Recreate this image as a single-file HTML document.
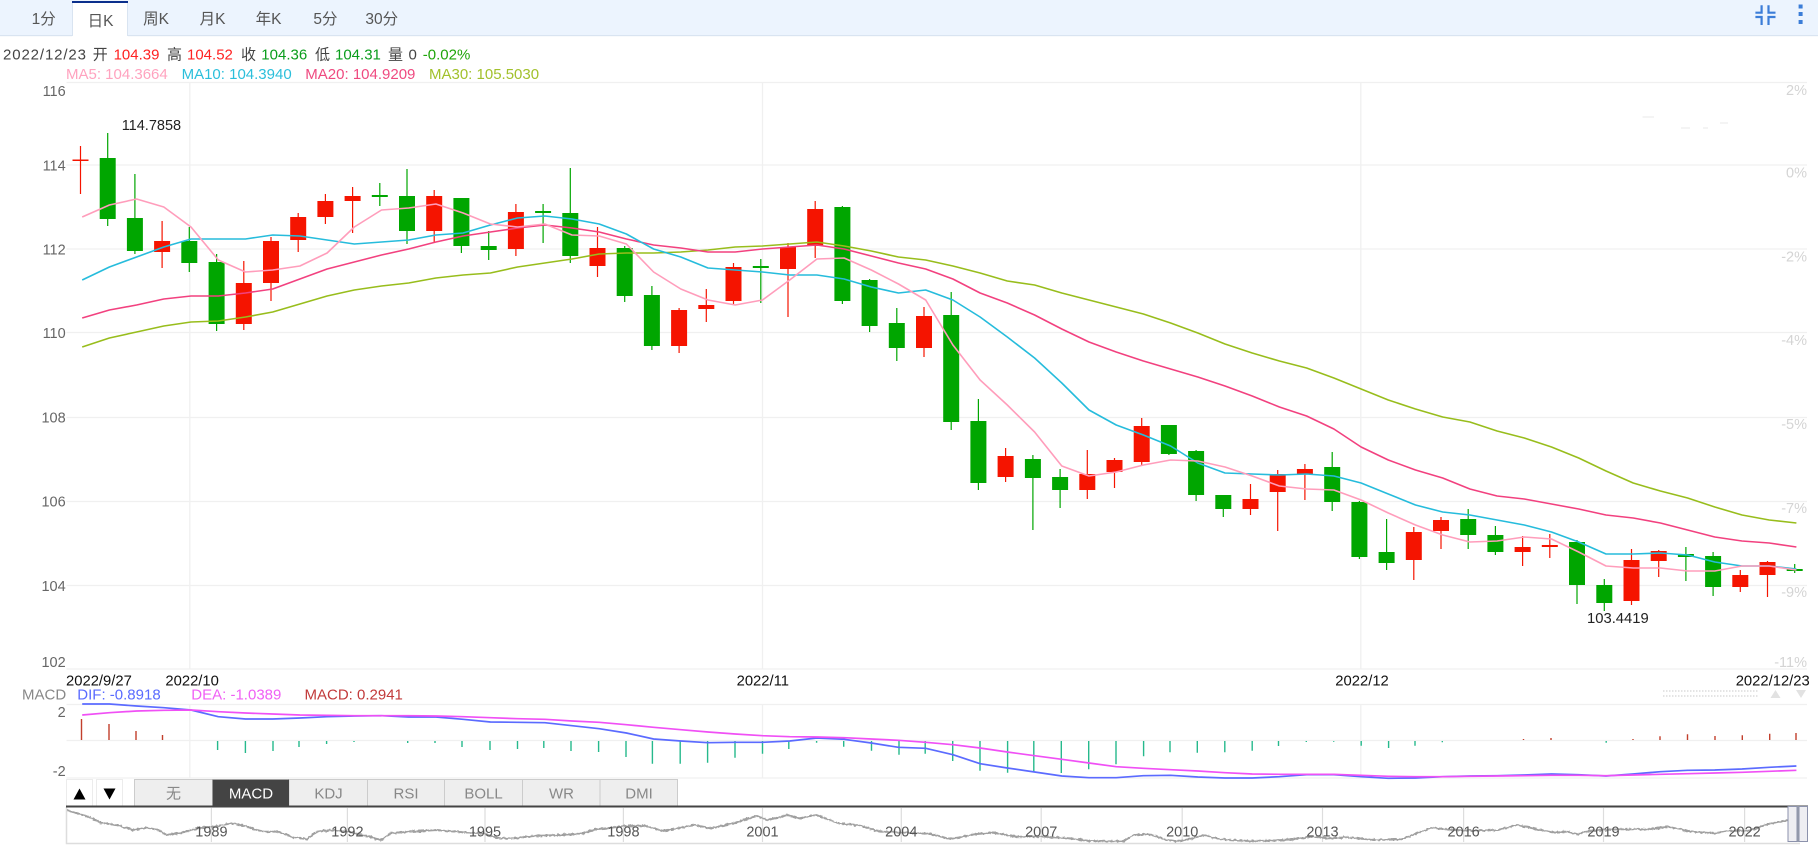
<!DOCTYPE html>
<html><head><meta charset="utf-8"><title>K</title>
<style>
html,body{margin:0;padding:0;background:#fff;width:1818px;height:868px;overflow:hidden}
svg{display:block}
text{font-family:"Liberation Sans","Noto Sans CJK SC",sans-serif}
.y{font-size:14.5px;fill:#666;text-anchor:end}
.p{font-size:14.5px;fill:#d4d4d4;text-anchor:end}
.d{font-size:14.8px;fill:#111}
.t{font-size:15.5px;fill:#555;text-anchor:middle}
.o{font-size:15px;fill:#444}
.r{font-size:15px;fill:#f22}
.g{font-size:15px;fill:#0a9d1c}
.m{font-size:15px}
.b{font-size:15px;fill:#888;text-anchor:middle}
.n{font-size:14.5px;fill:#555;text-anchor:middle}
.ma{fill:none;stroke-linejoin:round}
</style></head><body>
<svg width="1818" height="868" viewBox="0 0 1818 868" xmlns="http://www.w3.org/2000/svg">
<defs>
<filter id="jit" x="-2%" y="-30%" width="104%" height="160%"><feTurbulence type="fractalNoise" baseFrequency="0.35" numOctaves="2" seed="4"/><feDisplacementMap in="SourceGraphic" scale="3" xChannelSelector="R" yChannelSelector="G"/></filter>
</defs>
<!-- top bar -->
<rect x="0" y="0" width="1818" height="35" fill="#ecf4fe"/>
<rect x="0" y="35" width="1818" height="1.2" fill="#d9e4f1"/>
<rect x="72" y="1" width="56" height="36" fill="#fff"/>
<path d="M72.5 3V36M127.5 3V36" stroke="#d9e4f1" stroke-width="1" fill="none"/>
<rect x="72" y="1" width="56" height="2" fill="#0b2f8c"/>
<text class="t" x="43.7" y="24">1分</text>
<text class="t" x="100.5" y="26">日K</text>
<text class="t" x="156" y="24">周K</text>
<text class="t" x="212.6" y="24">月K</text>
<text class="t" x="268.6" y="24">年K</text>
<text class="t" x="325.4" y="24">5分</text>
<text class="t" x="381.8" y="24">30分</text>
<path d="M1761.6 5.3V12.7H1755.4M1768.5 5.3V12.7H1775.5M1755.4 17H1761.6V25M1775.5 17H1768.5V25" fill="none" stroke="#3b7dd8" stroke-width="2.2"/>
<path d="M1798.6 4.5h4v4h-4zM1798.6 12h4v4h-4zM1798.6 20h4v4h-4z" fill="#3b7dd8"/>
<!-- info -->
<text class="o" x="3" y="59.5" textLength="83" lengthAdjust="spacing">2022/12/23</text>
<text class="o" x="92.8" y="59.5">开</text><text class="r" x="113.6" y="59.5">104.39</text>
<text class="o" x="167" y="59.5">高</text><text class="r" x="187" y="59.5">104.52</text>
<text class="o" x="241" y="59.5">收</text><text class="g" x="261.3" y="59.5">104.36</text>
<text class="o" x="315" y="59.5">低</text><text class="g" x="335" y="59.5">104.31</text>
<text class="o" x="388" y="59.5">量</text><text class="o" x="408.5" y="59.5">0</text>
<text class="g" x="422.8" y="59.5" style="fill:#1fa50a">-0.02%</text>
<text class="m" x="66" y="79" fill="#ffa3bf">MA5: 104.3664</text>
<text class="m" x="181.6" y="79" fill="#2bbfdb">MA10: 104.3940</text>
<text class="m" x="305.3" y="79" fill="#ef4a80">MA20: 104.9209</text>
<text class="m" x="429" y="79" fill="#a2c12c">MA30: 105.5030</text>
<!-- grid -->
<path d="M66.5 82.5H1807M66.5 165H1807M66.5 249H1807M66.5 332.5H1807M66.5 417.5H1807M66.5 501.5H1807M66.5 585.5H1807M66.5 669H1807M66.5 704.5H1807M66.5 740.5H1807M66.5 778H1807M189.8 82V669M762.5 82V669M1360.8 82V669M189.8 704V778M762.5 704V778M1360.8 704V778" stroke="#f0f0f0" stroke-width="1.3" fill="none"/>
<!-- axis -->
<text class="y" x="65.7" y="96">116</text><text class="y" x="65.7" y="170.7">114</text><text class="y" x="65.7" y="254.3">112</text><text class="y" x="65.7" y="338">110</text><text class="y" x="65.7" y="422.7">108</text><text class="y" x="65.7" y="506.7">106</text><text class="y" x="65.7" y="591">104</text><text class="y" x="65.7" y="667">102</text>
<text class="p" x="1807" y="95">2%</text><text class="p" x="1807" y="177.5">0%</text><text class="p" x="1807" y="261.5">-2%</text><text class="p" x="1807" y="345">-4%</text><text class="p" x="1807" y="429">-5%</text><text class="p" x="1807" y="513">-7%</text><text class="p" x="1807" y="597">-9%</text><text class="p" x="1807" y="667">-11%</text>
<path d="M1642.5 117H1654M1681 128H1690M1703 128H1708M1720 123H1728" stroke="#e4e4e4" stroke-width=".8" fill="none"/>
<!-- wicks -->
<path fill="none" stroke="#f51400" stroke-width="1.2" d="M80.5 146V194M162.1 221V268M243.8 261V330M271 237V301M298.2 213V252M325.4 194V224M352.6 187V233M434.2 190V243M515.9 204V256M597.5 227V277M679.1 308V353M706.3 289V322M733.5 263V305M788 243V317M815.2 201V258M924 307V357M1005.6 448V482M1087.3 450V499M1114.5 458V488M1141.7 418V465M1250.5 484V515M1277.7 470V531M1304.9 464V500M1413.8 527V580M1441 517V549M1522.6 536V566M1549.8 534V558M1631.5 549V605M1658.7 550V577M1740.3 570V592M1767.5 561V597"/>
<path fill="none" stroke="#00a600" stroke-width="1.2" d="M107.7 133V226M134.9 174V254M189.3 227V272M216.6 254V331M379.8 183V206M407 169V244M461.4 198V253M488.7 231V260M543.1 204V243M570.3 168V263M624.7 246V302M651.9 286V350M760.8 259V303M842.4 206V304M869.6 279V332M896.8 308V361M951.2 292V430M978.4 399V490M1032.9 455V530M1060.1 469V508M1168.9 425V455M1196.1 450V501M1223.3 495V517M1332.2 452V511M1359.4 501V559M1386.6 519V570M1468.2 509V549M1495.4 526V555M1577 540V604M1604.3 579V611M1685.9 547V581M1713.1 552V596M1794.7 564V573"/>
<!-- bodies -->
<path fill="none" stroke="#f51400" stroke-width="16" d="M80.5 159.5V161M162.1 241V252M243.8 283V324M271 241V283M298.2 217V240M325.4 201V217M352.6 196V201M434.2 196V231M515.9 212V249M597.5 248V266M679.1 310V346M706.3 305V309M733.5 267V301M788 247V269M815.2 209V246M924 316V348M1005.6 456V477M1087.3 474V490M1114.5 460V472M1141.7 426V462M1250.5 499V509M1277.7 474V492M1304.9 469V474M1413.8 532V560M1441 520V531M1522.6 547V552M1549.8 545V547M1631.5 560V601M1658.7 551V561M1740.3 575V587M1767.5 562V575"/>
<path fill="none" stroke="#00a600" stroke-width="16" d="M107.7 158V219M134.9 218V251M189.3 241V263M216.6 262V324M379.8 195V197M407 196V231M461.4 198V246M488.7 246V250M543.1 211V213M570.3 213V256M624.7 248V296M651.9 295V346M760.8 266V268M842.4 207V301M869.6 280V326M896.8 323V348M951.2 315V422M978.4 421V483M1032.9 459V478M1060.1 477V490M1168.9 425V454M1196.1 451V495M1223.3 495V509M1332.2 467V502M1359.4 502V557M1386.6 552V563M1468.2 519V535M1495.4 535V552M1577 542V585M1604.3 585V603M1685.9 554V557M1713.1 556V587M1794.7 569V571"/>
<!-- MA lines -->
<g transform="translate(1.7 0)">
<polyline class="ma" stroke="#98bd1c" stroke-width="1.6" points="80.5,347 107.7,338 134.9,332 162.1,326 189.3,322 216.6,321 243.8,317 271,312 298.2,304 325.4,296 352.6,290 379.8,286 407,283 434.2,278 461.4,275 488.7,273 515.9,267 543.1,263 570.3,259 597.5,254 624.7,253 651.9,253 679.1,252 706.3,250 733.5,247 760.8,246 788,244 815.2,242 842.4,246 869.6,251 896.8,257 924,260 951.2,266 978.4,273 1005.6,281 1032.9,285 1060.1,293 1087.3,300 1114.5,307 1141.7,314 1168.9,323 1196.1,333 1223.3,344 1250.5,353 1277.7,361 1304.9,368 1332.2,378 1359.4,389 1386.6,400 1413.8,409 1441,417 1468.2,422 1495.4,431 1522.6,438 1549.8,447 1577,458 1604.3,471 1631.5,483 1658.7,491 1685.9,498 1713.1,507 1740.3,515 1767.5,520 1794.7,523"/>
<polyline class="ma" stroke="#f2417f" stroke-width="1.6" points="80.5,318 107.7,310 134.9,305 162.1,299 189.3,296 216.6,296 243.8,293 271,289 298.2,279 325.4,269 352.6,262 379.8,255 407,249 434.2,242 461.4,236 488.7,232 515.9,228 543.1,225 570.3,228 597.5,232 624.7,239 651.9,245 679.1,248 706.3,252 733.5,252 760.8,249 788,247 815.2,245 842.4,249 869.6,256 896.8,263 924,269 951.2,279 978.4,293 1005.6,303 1032.9,315 1060.1,329 1087.3,342 1114.5,352 1141.7,361 1168.9,369 1196.1,377 1223.3,386 1250.5,396 1277.7,407 1304.9,416 1332.2,429 1359.4,447 1386.6,460 1413.8,470 1441,478 1468.2,489 1495.4,496 1522.6,499 1549.8,504 1577,509 1604.3,515 1631.5,518 1658.7,523 1685.9,530 1713.1,537 1740.3,541 1767.5,543 1794.7,547"/>
<polyline class="ma" stroke="#26bcdc" stroke-width="1.6" points="80.5,280 107.7,267 134.9,257 162.1,247 189.3,239 216.6,239 243.8,239 271,235 298.2,236 325.4,240 352.6,244 379.8,242 407,240 434.2,235 461.4,233 488.7,225 515.9,218 543.1,216 570.3,219 597.5,224 624.7,234 651.9,249 679.1,257 706.3,268 733.5,270 760.8,272 788,275 815.2,275 842.4,279 869.6,287 896.8,293 924,290 951.2,300 978.4,317 1005.6,337 1032.9,358 1060.1,383 1087.3,410 1114.5,425 1141.7,435 1168.9,446 1196.1,463 1223.3,473 1250.5,474 1277.7,475 1304.9,474 1332.2,476 1359.4,483 1386.6,494 1413.8,505 1441,512 1468.2,515 1495.4,520 1522.6,525 1549.8,532 1577,542 1604.3,554 1631.5,554 1658.7,553 1685.9,555 1713.1,562 1740.3,566 1767.5,566 1794.7,569"/>
<polyline class="ma" stroke="#ff9dbb" stroke-width="1.6" points="80.5,217 107.7,205 134.9,199 162.1,207 189.3,227 216.6,260 243.8,272 271,270 298.2,266 325.4,253 352.6,227 379.8,210 407,208 434.2,204 461.4,213 488.7,224 515.9,227 543.1,224 570.3,235 597.5,236 624.7,244 651.9,272 679.1,289 706.3,300 733.5,305 760.8,300 788,280 815.2,259 842.4,258 869.6,270 896.8,284 924,300 951.2,345 978.4,380 1005.6,405 1032.9,432 1060.1,466 1087.3,476 1114.5,472 1141.7,465 1168.9,460 1196.1,461 1223.3,467 1250.5,476 1277.7,486 1304.9,489 1332.2,490 1359.4,500 1386.6,513 1413.8,525 1441,535 1468.2,542 1495.4,541 1522.6,537 1549.8,539 1577,552 1604.3,566 1631.5,568 1658.7,568 1685.9,571 1713.1,571 1740.3,566 1767.5,566 1794.7,570"/>
</g>
<!-- annotations -->
<text x="121.7" y="130" style="font-size:14.5px" fill="#222">114.7858</text>
<text x="1587" y="623" style="font-size:14.8px" fill="#222">103.4419</text>
<text class="d" x="66" y="685.5">2022/9/27</text>
<text class="d" x="165.4" y="685.5">2022/10</text>
<text class="d" x="736.6" y="685.5">2022/11</text>
<text class="d" x="1335.3" y="685.5">2022/12</text>
<text class="d" x="1735.7" y="685.5">2022/12/23</text>
<!-- macd legend -->
<text class="m" x="22" y="699.5" fill="#888">MACD</text>
<text class="m" x="77.3" y="699.5" fill="#5a6bff">DIF: -0.8918</text>
<text class="m" x="191.3" y="699.5" fill="#f060f5">DEA: -1.0389</text>
<text class="m" x="304.5" y="699.5" fill="#c23a3a">MACD: 0.2941</text>
<path d="M1663 691H1759M1663 696H1759" stroke="#dcdcdc" stroke-width="1.6" stroke-dasharray="1.5 1.5" fill="none"/>
<path d="M1770.5 698L1775.5 690L1780.5 698ZM1796 690L1801 698L1806 690Z" fill="#e2e2e2"/>
<text class="y" x="65.7" y="717">2</text><text class="y" x="65.7" y="776">-2</text>
<!-- macd histogram -->
<path fill="none" stroke="#c23f2c" stroke-width="1.4" d="M81.5 740V719M109 740V724M136 740V731M162.5 740V735M1523.5 740V739M1551 740V738M1633 740V739M1660 740V736.3M1687.5 740V734.3M1715 740V736M1742.3 740V735.3M1769.7 740V733.7M1796 740V733"/>
<path fill="none" stroke="#26b98c" stroke-width="1.4" d="M217.6 741V750M245.4 741V753M273 741V751M299 741V747M326.6 741V744M354 741V742M407.7 741V743M435 741V743M462 741V747M490 741V750M517.5 741V749M543.8 741V748M571 741V751M598.6 741V752M626 741V757M652.4 741V763.7M680.2 741V763.7M707.6 741V762.7M735 741V757.7M762.5 741V753.7M788.8 741V749M816.6 741V742.7M843.7 741V746.7M871.5 741V750.7M899 741V754.7M925.2 741V753.7M952.7 741V761M980 741V770.7M1007.6 741V772.7M1033.8 741V771.7M1061.3 741V773M1088.7 741V769.3M1116 741V764.3M1143.6 741V756.3M1170 741V752.3M1197.3 741V752.7M1224.8 741V752.3M1252.2 741V750.7M1278.5 741V746M1306.3 741V742M1333.7 741V741.7M1361.2 741V745.7M1388.6 741V748M1415 741V745.7M1442.3 741V742.3M1606.2 741V742.7"/>
<!-- macd lines -->
<g transform="translate(1.7 0)">
<polyline class="ma" stroke="#5b6bff" stroke-width="1.7" points="80.5,704 107.7,704 134.9,706 162.1,707.7 189.3,710 216.6,716.7 243.8,719 271,719 298.2,718 325.4,716.7 352.6,716 379.8,715.7 407,717 434.2,717 461.4,719.3 488.7,722 515.9,722.3 543.1,722.7 570.3,725.7 597.5,728.7 624.7,733 651.9,739 679.1,741 706.3,742.7 733.5,742.3 760.8,742.3 788,741 815.2,738 842.4,739.3 869.6,743 896.8,747.3 924,748.3 951.2,754.7 978.4,763.7 1005.6,768 1032.9,772 1060.1,776 1087.3,777.7 1114.5,777.7 1141.7,775.7 1168.9,775.3 1196.1,777 1223.3,778 1250.5,778 1277.7,776.7 1304.9,774.7 1332.2,774.7 1359.4,776.7 1386.6,778.3 1413.8,778 1441,776.7 1468.2,776 1495.4,775.7 1522.6,775 1549.8,774 1577,774.7 1604.3,776 1631.5,774 1658.7,771.7 1685.9,770.3 1713.1,770 1740.3,769 1767.5,767.3 1794.7,766"/>
<polyline class="ma" stroke="#f050f5" stroke-width="1.7" points="80.5,715 107.7,712.7 134.9,711 162.1,710.3 189.3,710 216.6,711.7 243.8,713 271,714 298.2,715 325.4,715.3 352.6,715.7 379.8,715.7 407,715.7 434.2,716 461.4,716.7 488.7,717.7 515.9,718.7 543.1,719.3 570.3,721 597.5,722.3 624.7,724.7 651.9,727.3 679.1,729.7 706.3,732 733.5,734 760.8,735.7 788,736.7 815.2,737 842.4,737.7 869.6,739 896.8,740.3 924,742.3 951.2,744.7 978.4,748 1005.6,752 1032.9,755.7 1060.1,759.3 1087.3,763 1114.5,766.7 1141.7,768.3 1168.9,769.7 1196.1,771 1223.3,772.7 1250.5,774 1277.7,774.3 1304.9,774.3 1332.2,774.3 1359.4,775.3 1386.6,776.3 1413.8,776.7 1441,776.7 1468.2,776.3 1495.4,776 1522.6,775.7 1549.8,775.3 1577,775.3 1604.3,775.7 1631.5,775 1658.7,774.3 1685.9,773.7 1713.1,773 1740.3,772.3 1767.5,771.3 1794.7,770.3"/>
</g>
<!-- indicator tabs -->
<g stroke="#ececec" stroke-width="1" fill="#fff"><rect x="66.5" y="779.5" width="26" height="27"/><rect x="96.5" y="779.5" width="26" height="27"/></g>
<path d="M73.5 799.5L79.5 788.5L85.5 799.5ZM103.5 788.5L109.5 799.5L115.5 788.5Z" fill="#000"/>
<g stroke="#ccc" stroke-width="1" fill="#eee">
<rect x="134.5" y="779.5" width="78" height="27"/><rect x="289" y="779.5" width="78.5" height="27"/><rect x="367.5" y="779.5" width="77" height="27"/><rect x="444.5" y="779.5" width="78" height="27"/><rect x="522.5" y="779.5" width="77.5" height="27"/><rect x="600" y="779.5" width="77.5" height="27"/>
</g>
<rect x="212.6" y="779.5" width="76.4" height="27" fill="#444"/>
<text class="b" x="173.5" y="798.5">无</text>
<text class="b" x="251" y="798.5" style="fill:#fff">MACD</text>
<text class="b" x="328.5" y="798.5">KDJ</text>
<text class="b" x="406" y="798.5">RSI</text>
<text class="b" x="483.5" y="798.5">BOLL</text>
<text class="b" x="561.5" y="798.5">WR</text>
<text class="b" x="639" y="798.5">DMI</text>
<!-- navigator -->
<path d="M211.4 808V842M347.4 808V842M485 808V842M623.4 808V842M762.5 808V842M901.3 808V842M1041.2 808V842M1182.2 808V842M1322.5 808V842M1463.6 808V842M1603.5 808V842M1744.6 808V842" stroke="#ddd" stroke-width="1.2" fill="none"/>
<g filter="url(#jit)" fill="none" stroke="#a0a0a0" stroke-width="1.9">
<polyline vector-effect="non-scaling-stroke" transform="translate(0 660) scale(.38647 .33333)" points="172,450 200,460 240,475 260,488 300,495 345,510 380,503 410,510 430,525 470,518 510,505 550,500 600,490 630,497 680,515 720,515 760,533 795,537 820,515 860,510 900,515 940,525 985,540 1010,520 1060,515 1130,510 1200,517 1250,520 1290,535 1330,535 1380,528 1450,525 1510,520 1540,508 1568,505"/>
<polyline vector-effect="non-scaling-stroke" transform="translate(606 660) scale(.38647 .33333)" points="0,505 50,498 100,497 150,513 230,495 270,505 330,490 390,468 420,480 470,465 500,475 545,465 600,490 650,495 710,515 780,518 840,522 890,537 960,522 1000,518 1060,530 1130,530 1200,535 1250,543 1300,544 1340,543 1365,525 1405,522 1450,540 1480,544 1510,537 1550,525 1568,533"/>
<polyline vector-effect="non-scaling-stroke" transform="translate(1212 660) scale(.38647 .33333)" points="0,533 50,541 100,543 150,542 210,538 260,530 300,535 350,532 420,540 490,538 530,520 570,503 620,510 690,512 740,510 790,495 830,505 880,517 920,515 945,522 980,512 1050,508 1130,508 1180,500 1240,515 1300,520 1340,512 1390,512 1440,492 1490,480"/>
</g>
<path d="M66.5 807V843.5H1800" stroke="#ddd" stroke-width="1.5" fill="none"/>
<rect x="66" y="805.5" width="1742" height="2" fill="#444"/>
<text class="n" x="211.4" y="836.5">1989</text><text class="n" x="347.4" y="836.5">1992</text><text class="n" x="485" y="836.5">1995</text><text class="n" x="623.4" y="836.5">1998</text><text class="n" x="762.5" y="836.5">2001</text><text class="n" x="901.3" y="836.5">2004</text><text class="n" x="1041.2" y="836.5">2007</text><text class="n" x="1182.2" y="836.5">2010</text><text class="n" x="1322.5" y="836.5">2013</text><text class="n" x="1463.6" y="836.5">2016</text><text class="n" x="1603.5" y="836.5">2019</text><text class="n" x="1744.6" y="836.5">2022</text>
<rect x="1797" y="806" width="1.8" height="36" fill="#999ea8"/>
<rect x="1788" y="806.5" width="9" height="35" fill="#eeeef2" stroke="#8c92ac"/>
<rect x="1799" y="806.5" width="8.5" height="35" fill="#eeeef2" stroke="#8c92ac"/>
</svg>
</body></html>
